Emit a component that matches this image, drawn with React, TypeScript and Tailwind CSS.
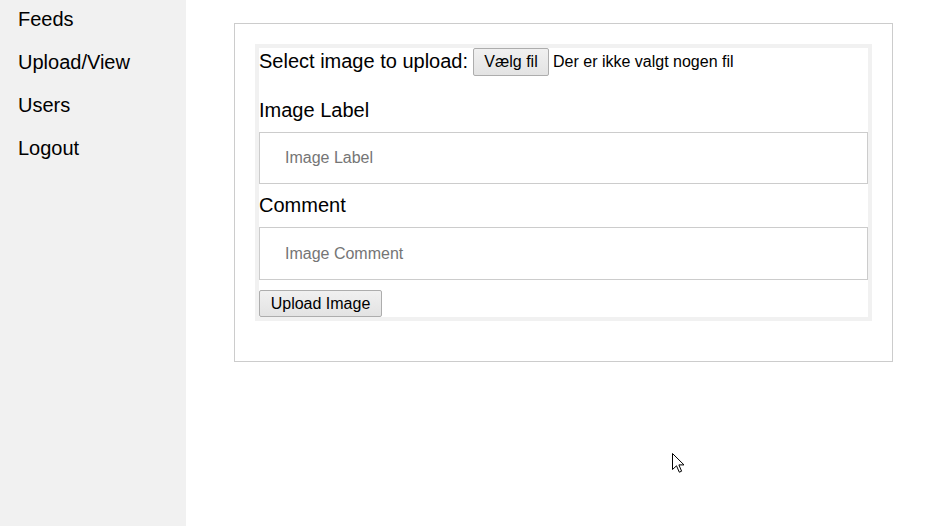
const navItems = ['Feeds', 'Upload/View', 'Users', 'Logout']

const font = { fontFamily: '"Liberation Sans", Arial, sans-serif' }

const Sidebar = () => {
  return (
    <div className="w-[186px] shrink-0 bg-[#f1f1f1] pt-[8px]">
      {navItems.map((item) => (
        <div key={item} className="pl-[18px] pb-[20px] text-[20px] leading-[23px] text-black">
          {item}
        </div>
      ))}
    </div>
  )
}

const GreyButton = ({ label, className }: { label: string; className?: string }) => {
  return (
    <button
      type="button"
      className={`box-border flex items-center justify-center rounded-[2px] border border-[#adadad] bg-gradient-to-b from-[#f0f0f0] to-[#e3e3e3] px-[9px] text-[16px] leading-[18px] text-black ${className ?? ''}`}
    >
      {label}
    </button>
  )
}

const UploadForm = () => {
  return (
    <div className="box-border border-4 border-[#f1f1f1]">
      <div className="flex h-[29px] items-start">
        <span className="mt-[2px] text-[20px] leading-[23px] text-black">Select image to upload:</span>
        <GreyButton label="Vælg fil" className="ml-[5px] h-[28px] w-[76px]" />
        <span className="ml-[4px] mt-[5px] text-[16px] leading-[18px] text-black">Der er ikke valgt nogen fil</span>
      </div>

      <div className="mt-[22px] text-[20px] leading-[23px] text-black">Image Label</div>
      <input
        placeholder="Image Label"
        className="mt-[10px] box-border block h-[52px] w-full border border-[#cccccc] px-[25px] text-[16px] text-black outline-none placeholder:text-[#757575]"
        style={font}
      />

      <div className="mt-[10px] text-[20px] leading-[23px] text-black">Comment</div>
      <input
        placeholder="Image Comment"
        className="mt-[10px] box-border block h-[53px] w-full border border-[#cccccc] px-[25px] text-[16px] text-black outline-none placeholder:text-[#757575]"
        style={font}
      />

      <GreyButton label="Upload Image" className="mt-[10px] h-[27px] w-[123px]" />
    </div>
  )
}

const Cursor = () => {
  return (
    <svg className="absolute left-[672px] top-[453px]" width="13" height="20" viewBox="0 0 13 20">
      <path
        d="M0.5 0.5 L0.5 16.5 L4.5 12.8 L7.3 19.2 L9.6 18.2 L6.9 11.9 L12 11.9 Z"
        fill="#ffffff"
        stroke="#000000"
        strokeWidth="1"
        strokeLinejoin="miter"
      />
    </svg>
  )
}

const App = () => {
  return (
    <div className="relative flex h-[526px] w-[939px] overflow-hidden bg-white" style={font}>
      <Sidebar />
      <div className="flex-1">
        <div className="ml-[48px] mt-[23px] box-border w-[659px] border border-[#cccccc] px-[20px] pt-[20px] pb-[40px]">
          <UploadForm />
        </div>
      </div>
      <Cursor />
    </div>
  )
}

export default App
